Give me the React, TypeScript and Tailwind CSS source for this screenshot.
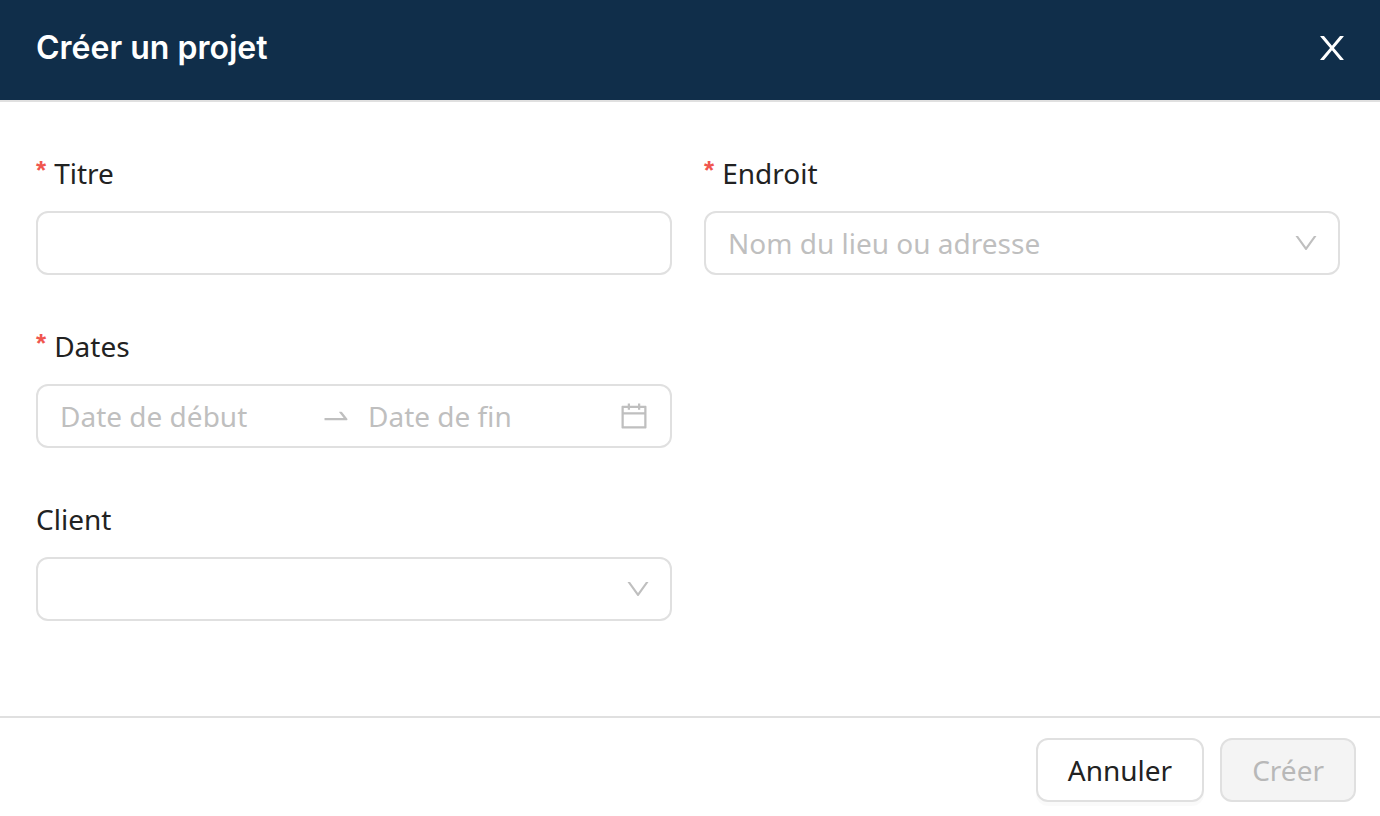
import type { ReactNode } from 'react';
import { AiOutlineCalendar, AiOutlineDown, AiOutlineSwapRight } from 'react-icons/ai';

const controlClass =
  'h-16 w-full rounded-xl border-2 border-[#e0e0e0] bg-white outline-none focus:border-[#102e4a]';

function CloseIcon() {
  return (
    <svg viewBox="0 0 1024 1024" className="size-[38px]" fill="currentColor" aria-hidden="true">
      <path d="M563.8 512l262.5-312.9c4.4-5.2.7-13.1-6.1-13.1h-79.8c-4.7 0-9.2 2.1-12.3 5.7L511.6 449.8 295.1 191.7c-3-3.6-7.5-5.7-12.3-5.7H203c-6.8 0-10.5 7.9-6.1 13.1L459.4 512 196.9 824.9A7.95 7.95 0 00203 838h79.8c4.7 0 9.2-2.1 12.3-5.7l216.5-258.1 216.5 258.1c3 3.6 7.5 5.7 12.3 5.7h79.8c6.8 0 10.5-7.9 6.1-13.1L563.8 512z" />
    </svg>
  );
}

function Field({
  id,
  label,
  required = false,
  children,
}: {
  id: string;
  label: string;
  required?: boolean;
  children: ReactNode;
}) {
  return (
    <div className="min-w-0">
      <label htmlFor={id} className="mb-[14px] flex h-12 items-start gap-2 leading-[48px]">
        {required && (
          <span
            className="font-['Liberation_Sans'] text-[26px] leading-[42px] font-bold text-[#f0564f]"
            aria-hidden="true"
          >
            *
          </span>
        )}
        {label}
      </label>
      {children}
    </div>
  );
}

function SelectBox({ id, placeholder = '' }: { id: string; placeholder?: string }) {
  return (
    <div className="relative">
      <select
        id={id}
        defaultValue=""
        className={`${controlClass} appearance-none pr-16 pl-[22px] text-[#bfbfbf]`}
      >
        <option value="">{placeholder}</option>
      </select>
      <AiOutlineDown className="pointer-events-none absolute inset-y-0 right-5 my-auto size-7 text-[#bfbfbf]" />
    </div>
  );
}

export default function App() {
  return (
    <form
      className="flex min-h-screen flex-col bg-white font-['Noto_Sans',sans-serif] text-[28px] text-[#222222]"
      onSubmit={(event) => event.preventDefault()}
    >
      <header className="flex items-center justify-between border-b-2 border-[#e0e0e0] bg-[#102e4a] pt-6 pr-[29px] pb-7 pl-9 text-white">
        <h1 className="font-['Inter',sans-serif] text-[32px] leading-[48px] font-semibold">
          Créer un projet
        </h1>
        <button type="button" aria-label="Fermer" className="cursor-pointer">
          <CloseIcon />
        </button>
      </header>

      <main className="grid flex-1 grid-cols-2 content-start gap-x-8 gap-y-[47px] pt-[47px] pr-10 pb-10 pl-9">
        <Field id="titre" label="Titre" required>
          <input id="titre" type="text" required className={`${controlClass} px-[22px]`} />
        </Field>
        <Field id="endroit" label="Endroit" required>
          <SelectBox id="endroit" placeholder="Nom du lieu ou adresse" />
        </Field>
        <Field id="date-debut" label="Dates" required>
          <div className={`${controlClass} flex items-center pr-5 pl-[22px] text-[#bfbfbf]`}>
            <input
              id="date-debut"
              type="text"
              placeholder="Date de début"
              className="w-0 min-w-0 flex-1 text-[#222222] outline-none placeholder:text-[#bfbfbf]"
            />
            <AiOutlineSwapRight className="mx-4 size-8 shrink-0" />
            <input
              type="text"
              aria-label="Date de fin"
              placeholder="Date de fin"
              className="w-0 min-w-0 flex-1 text-[#222222] outline-none placeholder:text-[#bfbfbf]"
            />
            <AiOutlineCalendar className="ml-[6px] size-8 shrink-0" />
          </div>
        </Field>
        <div className="col-start-1 min-w-0">
          <Field id="client" label="Client">
            <SelectBox id="client" />
          </Field>
        </div>
      </main>

      <footer className="flex justify-end gap-4 border-t-2 border-[#e0e0e0] px-6 pt-5 pb-[14px]">
        <button
          type="button"
          className="h-16 cursor-pointer rounded-xl border-2 border-[#e0e0e0] bg-white px-[30px] shadow-[0_4px_0_rgba(0,0,0,0.02)]"
        >
          Annuler
        </button>
        <button
          type="submit"
          disabled
          className="h-16 rounded-xl border-2 border-[#e0e0e0] bg-[#f4f4f4] px-[30px] text-[#b8b8b8]"
        >
          Créer
        </button>
      </footer>
    </form>
  );
}
